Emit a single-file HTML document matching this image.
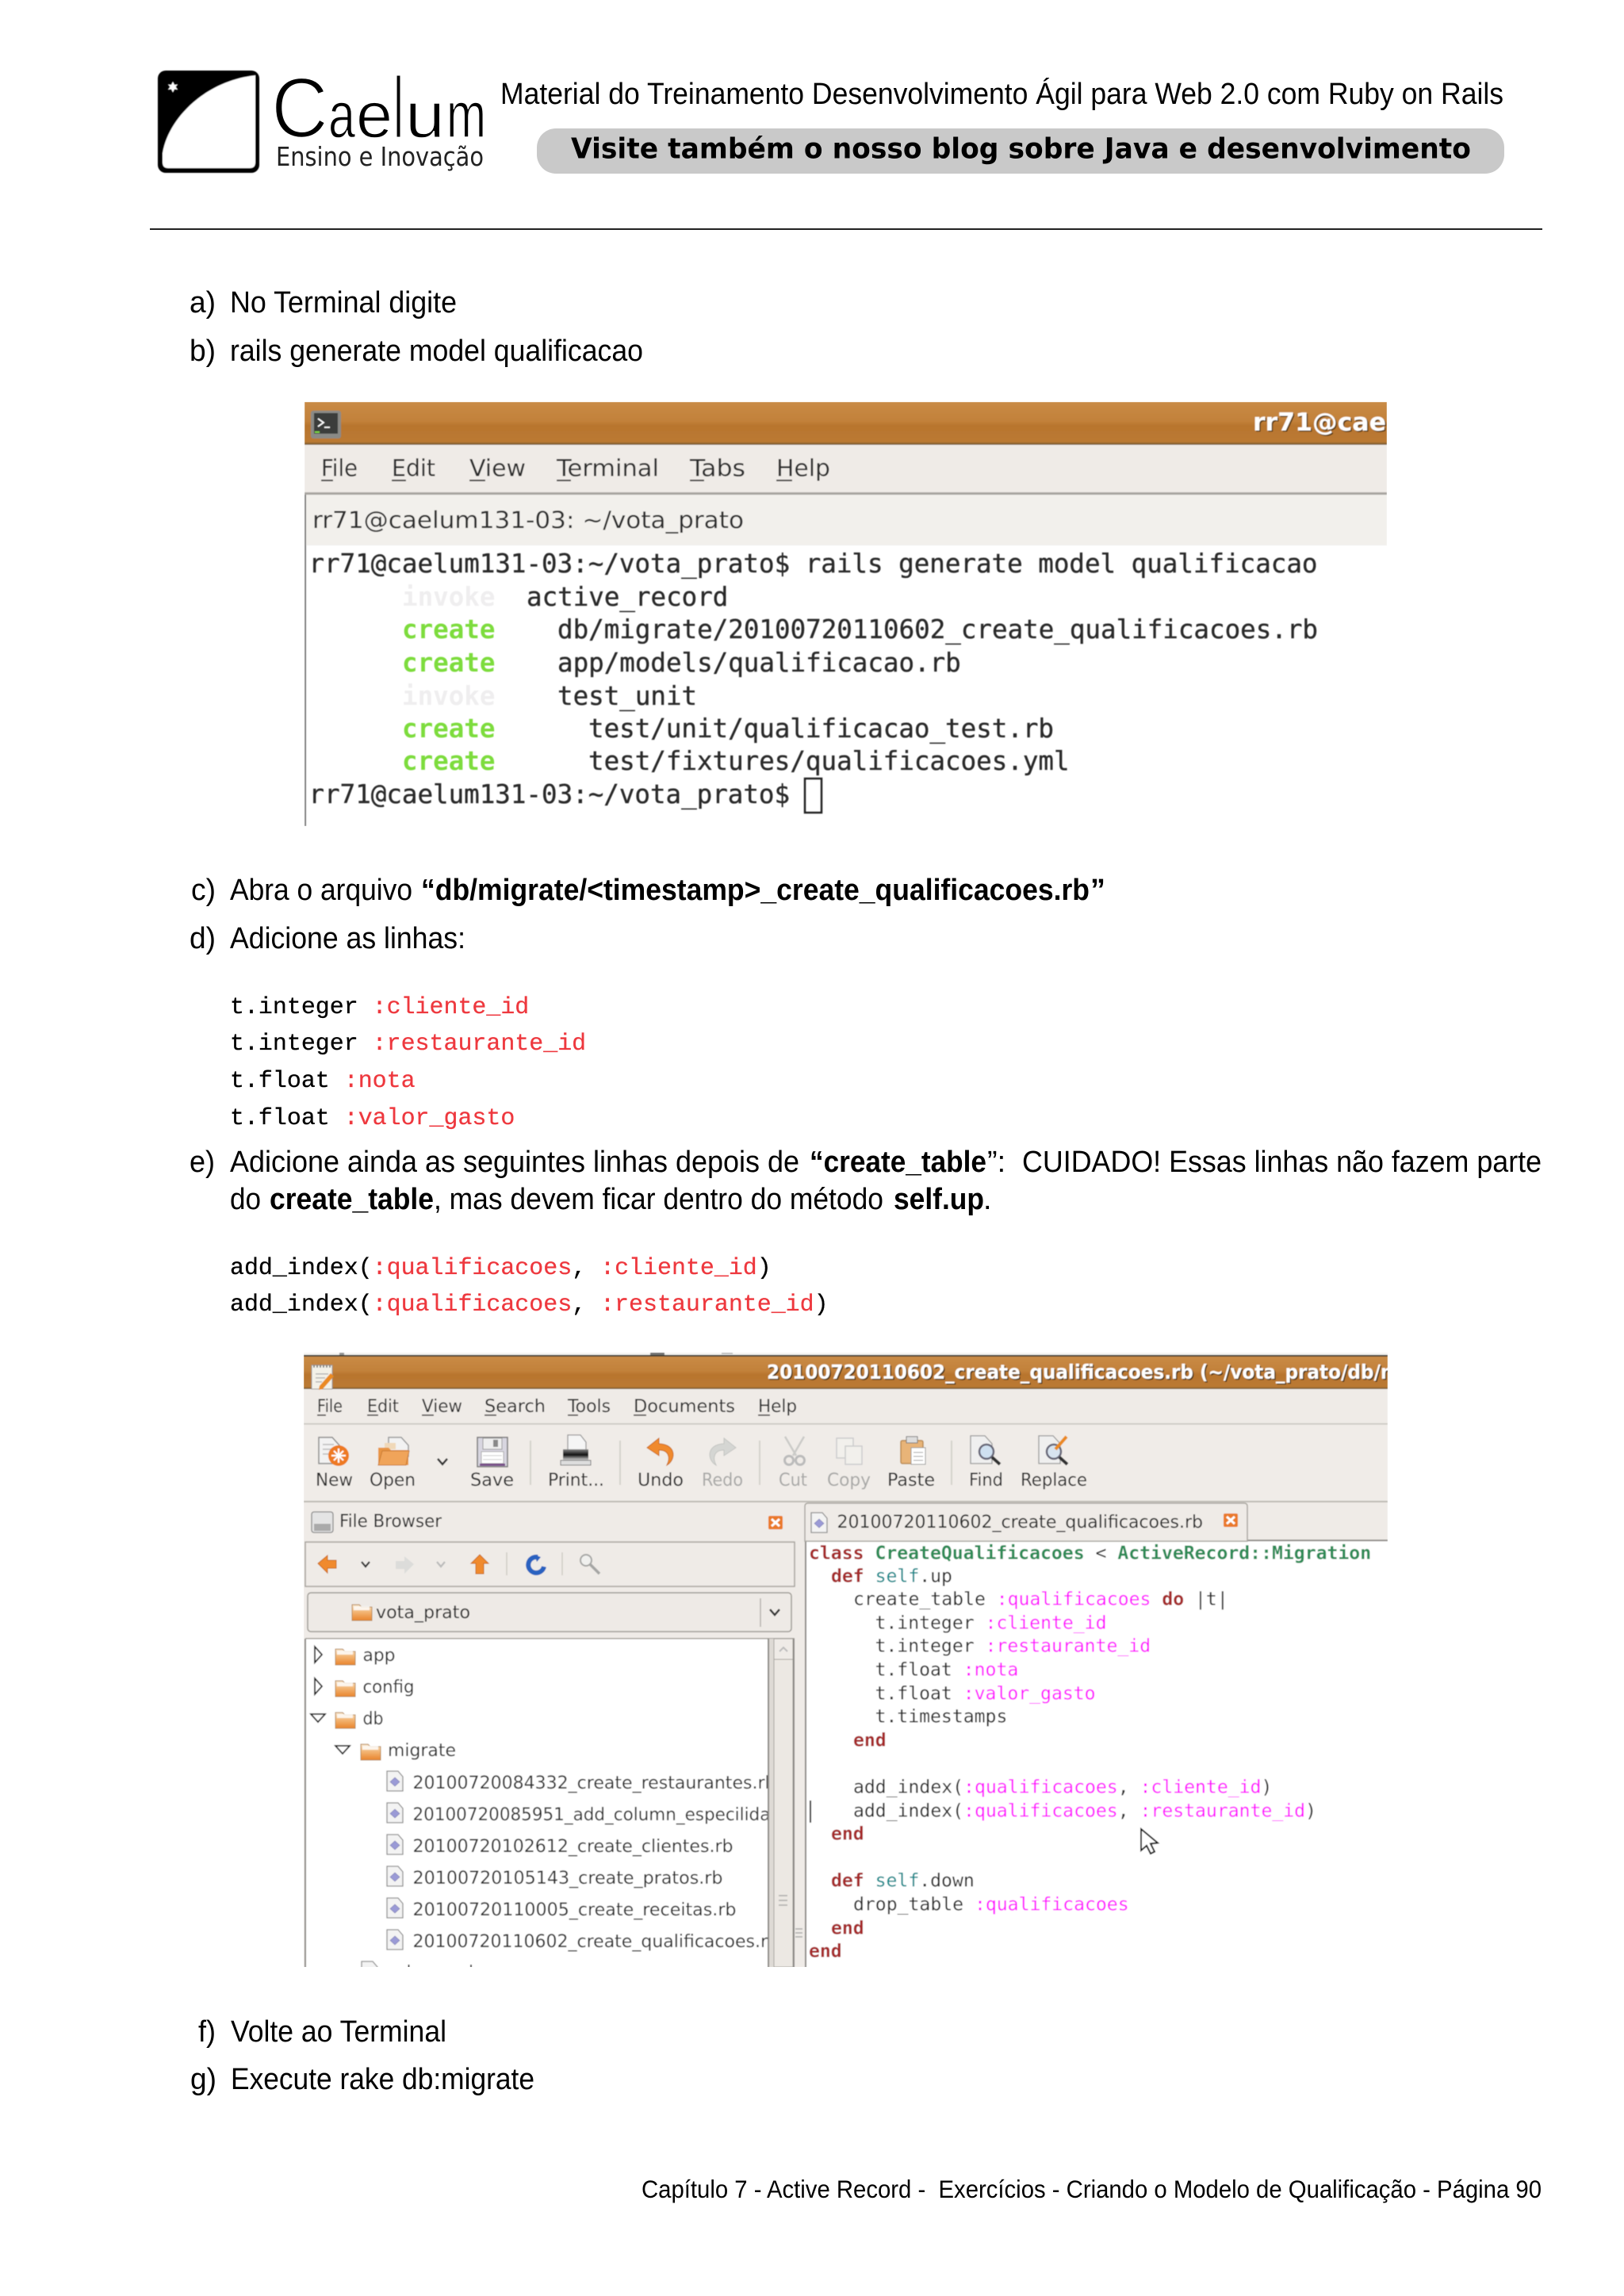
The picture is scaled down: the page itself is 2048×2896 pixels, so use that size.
<!DOCTYPE html>
<html><head><meta charset="utf-8"><title>Capítulo 7</title>
<style>
html,body{margin:0;padding:0;background:#fff}
svg{display:block}
text{white-space:pre}
.b{font-family:"Liberation Sans",sans-serif;font-size:37.9px;fill:#000}
.bb{font-family:"Liberation Sans",sans-serif;font-size:37.9px;font-weight:bold;fill:#000}
.c{font-family:"Liberation Mono",monospace;font-size:29.95px;fill:#000;stroke:#000;stroke-width:.25px}
.r{fill:#ee383e;stroke:#ee383e}
.d{font-family:"DejaVu Sans",sans-serif;fill:#2e2e2e}
.m{font-family:"DejaVu Sans Mono",monospace;font-size:32.5px;fill:#2a2a2a;stroke:#2a2a2a;stroke-width:.35px}
.cr{font-weight:bold;fill:#7ddc3c;stroke:none}
.iv{font-weight:bold;fill:#efeeef;stroke:none}
.e{font-family:"DejaVu Sans Mono",monospace;font-size:23.1px;fill:#2a2a2a}
.k{fill:#a52a2a;font-weight:bold}
.g{fill:#2e8b57;font-weight:bold}
.s{fill:#ff00ff}
.t{fill:#008a8c}
.u{font-size:22.4px}
.gr{fill:#a9a9a7}
</style></head>
<body>
<svg xmlns="http://www.w3.org/2000/svg" width="2048" height="2896" viewBox="0 0 2048 2896">
<defs>
<linearGradient id="tb" x1="0" y1="0" x2="0" y2="1">
<stop offset="0" stop-color="#c98b46"/><stop offset=".45" stop-color="#c2813a"/><stop offset=".55" stop-color="#b8752e"/><stop offset=".93" stop-color="#bb7a33"/><stop offset="1" stop-color="#6f5734"/>
</linearGradient>
<linearGradient id="fo" x1="0" y1="0" x2="0" y2="1">
<stop offset="0" stop-color="#f5e3c8"/><stop offset=".45" stop-color="#f3b777"/><stop offset="1" stop-color="#e8842c"/>
</linearGradient>
<linearGradient id="pr" x1="0" y1="0" x2="0" y2="1">
<stop offset="0" stop-color="#888"/><stop offset=".5" stop-color="#111"/><stop offset="1" stop-color="#ddd"/>
</linearGradient>
<g id="fold"><path d="M0 3 h9 l3 3 h13 v17 h-25z" fill="url(#fo)" stroke="#b78a58" stroke-width="1"/><rect x="2" y="5" width="20" height="5" fill="#fff" opacity=".8"/></g>
<g id="doc"><path d="M1 1 h14 l6 7 v18 h-20z" fill="#f3f3f3" stroke="#8f8f8f" stroke-width="1.3"/><path d="M11 9 l6 5.500 -6 5.500 -6 -5.500z" fill="#9a9ad6" stroke="#7a7ab0" stroke-width=".6"/></g>
<g id="cl"><rect width="18" height="17" rx="2" fill="#ea7a2a"/><path d="M4 4 l10 9 M14 4 l-10 9" stroke="#fff" stroke-width="3"/></g>
<clipPath id="cT"><rect x="384" y="507" width="1365" height="535"/></clipPath>
<clipPath id="cG"><rect x="383" y="1706" width="1367" height="775"/></clipPath>
<filter id="sb"><feGaussianBlur stdDeviation=".55"/></filter>
</defs>
<rect width="2048" height="2896" fill="#fff"/>

<!-- logo -->
<g filter="url(#sb)">
<rect x="199" y="89" width="128" height="129" rx="10" fill="#000"/>
<path d="M205 205 V193 C212 150 258 102 322 95 V205 Q322 212 315 212 H212 Q205 212 205 205Z" fill="#fff"/>
<path d="M218 103 l2 4 4 -.5 -2.500 3 2.500 3.500 -4 -.5 -2 4 -2 -4 -4 .5 2.500 -3.500 -2.500 -3 4 .5z" fill="#fff"/>
</g>
<g font-family="Liberation Sans,sans-serif" fill="#000" stroke="#fff">
<text x="342" y="173" font-size="108" textLength="72" lengthAdjust="spacingAndGlyphs" stroke-width="2.600">C</text>
<text x="414" y="173" font-size="82" textLength="34" lengthAdjust="spacingAndGlyphs" stroke-width="1.400">a</text>
<text x="449" y="173" font-size="82" textLength="46" lengthAdjust="spacingAndGlyphs" stroke-width="1.400">e</text>
<text x="497" y="173" font-size="108" textLength="11" lengthAdjust="spacingAndGlyphs" stroke-width="1">l</text>
<text x="511" y="173" font-size="82" textLength="50" lengthAdjust="spacingAndGlyphs" stroke-width="1.400">u</text>
<text x="563" y="173" font-size="82" textLength="50" lengthAdjust="spacingAndGlyphs" stroke-width="1.400">m</text>
</g>
<text x="348" y="209" font-family="DejaVu Sans,sans-serif" font-size="32.500" textLength="262" lengthAdjust="spacingAndGlyphs" fill="#222">Ensino e Inovação</text>

<text class="b" x="631" y="131" textLength="1265" lengthAdjust="spacingAndGlyphs">Material do Treinamento Desenvolvimento Ágil para Web 2.0 com Ruby on Rails</text>
<rect x="677" y="162" width="1220" height="57" rx="24" fill="#c9c9c9"/>
<text x="720" y="199.500" font-family="DejaVu Sans,sans-serif" font-weight="bold" font-size="36" fill="#000" textLength="1135" lengthAdjust="spacingAndGlyphs">Visite também o nosso blog sobre Java e desenvolvimento</text>
<rect x="189" y="288" width="1756" height="2" fill="#222"/>

<text class="b" x="239" y="394" textLength="33" lengthAdjust="spacingAndGlyphs">a)</text><text class="b" x="290" y="394" textLength="286" lengthAdjust="spacingAndGlyphs">No Terminal digite</text>
<text class="b" x="239" y="455" textLength="33" lengthAdjust="spacingAndGlyphs">b)</text><text class="b" x="290" y="455" textLength="521" lengthAdjust="spacingAndGlyphs">rails generate model qualificacao</text>

<!-- terminal -->
<g clip-path="url(#cT)" filter="url(#sb)">
<rect x="384" y="507" width="1365" height="54" fill="url(#tb)"/>
<rect x="384" y="561" width="1365" height="61" fill="#efebe7"/>
<rect x="384" y="621" width="1365" height="3" fill="#a8a5a0"/>
<rect x="385" y="624" width="1364" height="64" fill="#f2f0ec"/>
<rect x="384" y="624" width="2" height="418" fill="#7c7c7c"/>
<rect x="392" y="518" width="38" height="35" rx="3" fill="#8a8a86"/>
<rect x="396" y="521" width="30" height="26" fill="#3a3c3a"/>
<path d="M401 528 l7 5 -7 5 M409 539 h7" stroke="#fff" stroke-width="1.800" fill="none"/>
<rect x="397" y="544" width="6" height="2" fill="#7fd944"/>
<text x="1581.500" y="544.500" font-family="DejaVu Sans,sans-serif" font-weight="bold" font-size="31" fill="#5a3a15" textLength="168" lengthAdjust="spacingAndGlyphs">rr71@cae</text>
<text x="1580" y="543" font-family="DejaVu Sans,sans-serif" font-weight="bold" font-size="31" fill="#fff" textLength="168" lengthAdjust="spacingAndGlyphs">rr71@cae</text>
<text class="d" font-size="29" x="405" y="600.500" textLength="46" lengthAdjust="spacingAndGlyphs">File</text>
<text class="d" font-size="29" x="494" y="600.500" textLength="55" lengthAdjust="spacingAndGlyphs">Edit</text>
<text class="d" font-size="29" x="592" y="600.500" textLength="71" lengthAdjust="spacingAndGlyphs">View</text>
<text class="d" font-size="29" x="702" y="600.500" textLength="129" lengthAdjust="spacingAndGlyphs">Terminal</text>
<text class="d" font-size="29" x="870" y="600.500" textLength="70" lengthAdjust="spacingAndGlyphs">Tabs</text>
<text class="d" font-size="29" x="979" y="600.500" textLength="68" lengthAdjust="spacingAndGlyphs">Help</text>
<path d="M405 606h15M494 606h18M592 606h20M702 606h18M870 606h18M979 606h20" stroke="#333" stroke-width="2"/>
<text class="d" font-size="29" x="394" y="666" textLength="544" lengthAdjust="spacingAndGlyphs">rr71@caelum131-03: ~/vota_prato</text>
<text class="m" x="389.500" y="722" textLength="1272" lengthAdjust="spacing">rr71@caelum131-03:~/vota_prato$ rails generate model qualificacao</text>
<text class="m iv" x="507" y="764">invoke</text><text class="m" x="664" y="764">active_record</text>
<text class="m cr" x="507" y="805">create</text><text class="m" x="703" y="805" textLength="959" lengthAdjust="spacing">db/migrate/20100720110602_create_qualificacoes.rb</text>
<text class="m cr" x="507" y="847">create</text><text class="m" x="703" y="847">app/models/qualificacao.rb</text>
<text class="m iv" x="507" y="889">invoke</text><text class="m" x="703" y="889">test_unit</text>
<text class="m cr" x="507" y="930">create</text><text class="m" x="742" y="930">test/unit/qualificacao_test.rb</text>
<text class="m cr" x="507" y="971">create</text><text class="m" x="742" y="971">test/fixtures/qualificacoes.yml</text>
<text class="m" x="389.500" y="1013">rr71@caelum131-03:~/vota_prato$</text>
<rect x="1015" y="982" width="21" height="43" fill="none" stroke="#222" stroke-width="2.500"/>
</g>

<text class="b" x="241" y="1135" textLength="31" lengthAdjust="spacingAndGlyphs">c)</text><text class="b" x="290" y="1135" textLength="230" lengthAdjust="spacingAndGlyphs">Abra o arquivo</text>
<text class="bb" x="531" y="1135" textLength="843" lengthAdjust="spacingAndGlyphs">“db/migrate/&lt;timestamp&gt;_create_qualificacoes.rb</text><text class="bb" x="1375" y="1135">”</text>
<text class="b" x="239" y="1196" textLength="33" lengthAdjust="spacingAndGlyphs">d)</text><text class="b" x="290" y="1196" textLength="297" lengthAdjust="spacingAndGlyphs">Adicione as linhas:</text>

<text class="c" x="290" y="1278">t.integer <tspan class="r">:cliente_id</tspan></text>
<text class="c" x="290" y="1324">t.integer <tspan class="r">:restaurante_id</tspan></text>
<text class="c" x="290" y="1371">t.float <tspan class="r">:nota</tspan></text>
<text class="c" x="290" y="1418">t.float <tspan class="r">:valor_gasto</tspan></text>

<text class="b" x="239" y="1478" textLength="32" lengthAdjust="spacingAndGlyphs">e)</text>
<text class="b" x="290" y="1478" textLength="718" lengthAdjust="spacingAndGlyphs">Adicione ainda as seguintes linhas depois de</text>
<text class="bb" x="1021" y="1478" textLength="223" lengthAdjust="spacingAndGlyphs">“create_table</text>
<text class="b" x="1245" y="1478">”:</text>
<text class="b" x="1289" y="1478" textLength="655" lengthAdjust="spacingAndGlyphs">CUIDADO! Essas linhas não fazem parte</text>
<text class="b" x="290" y="1525" textLength="39" lengthAdjust="spacingAndGlyphs">do</text>
<text class="bb" x="340" y="1525" textLength="207" lengthAdjust="spacingAndGlyphs">create_table</text>
<text class="b" x="547" y="1525" textLength="567" lengthAdjust="spacingAndGlyphs">, mas devem ficar dentro do método</text>
<text class="bb" x="1127" y="1525" textLength="114" lengthAdjust="spacingAndGlyphs">self.up</text>
<text class="b" x="1240" y="1525">.</text>

<text class="c" x="290" y="1607">add_index(<tspan class="r">:qualificacoes</tspan>, <tspan class="r">:cliente_id</tspan>)</text>
<text class="c" x="290" y="1653">add_index(<tspan class="r">:qualificacoes</tspan>, <tspan class="r">:restaurante_id</tspan>)</text>

<!-- gedit -->
<g clip-path="url(#cG)" filter="url(#sb)">
<rect x="383" y="1706" width="1367" height="4" fill="#f5f4f2"/>
<rect x="428" y="1706" width="6" height="3" fill="#999"/><rect x="820" y="1706" width="18" height="3" fill="#777"/><rect x="910" y="1706" width="14" height="2" fill="#bbb"/>
<rect x="383" y="1709" width="1367" height="2" fill="#3e3a30"/>
<rect x="383" y="1711" width="1367" height="41" fill="url(#tb)"/>
<rect x="383" y="1752" width="1367" height="43" fill="#efebe7"/>
<rect x="383" y="1795" width="1367" height="2" fill="#cfccc6"/>
<rect x="383" y="1797" width="1367" height="97" fill="#f0ece8"/>
<rect x="383" y="1893" width="1367" height="2" fill="#bdbab4"/>
<rect x="383" y="1895" width="1367" height="586" fill="#efebe7"/>
<!-- title -->
<path d="M393 1722h26v30h-26z" fill="#f3f1e8" stroke="#999" stroke-width="1"/>
<path d="M396 1722v3M400 1722v3M404 1722v3M408 1722v3M412 1722v3M416 1722v3" stroke="#666" stroke-width="1.500"/>
<path d="M398 1733h16M398 1738h12M398 1743h8" stroke="#aaa" stroke-width="1.200"/>
<path d="M403 1748 l14 -16 4 4 -14 16 -5 1z" fill="#ea8a20"/>
<text x="968.500" y="1740.500" font-family="DejaVu Sans,sans-serif" font-weight="bold" font-size="24.500" fill="#51371a" textLength="798" lengthAdjust="spacingAndGlyphs">20100720110602_create_qualificacoes.rb (~/vota_prato/db/m</text>
<text x="967" y="1739" font-family="DejaVu Sans,sans-serif" font-weight="bold" font-size="24.500" fill="#fff" textLength="798" lengthAdjust="spacingAndGlyphs">20100720110602_create_qualificacoes.rb (~/vota_prato/db/m</text>
<!-- menu -->
<text class="d u" x="400" y="1781" textLength="32" lengthAdjust="spacingAndGlyphs">File</text>
<text class="d u" x="463" y="1781" textLength="40" lengthAdjust="spacingAndGlyphs">Edit</text>
<text class="d u" x="532" y="1781" textLength="51" lengthAdjust="spacingAndGlyphs">View</text>
<text class="d u" x="611" y="1781" textLength="77" lengthAdjust="spacingAndGlyphs">Search</text>
<text class="d u" x="716" y="1781" textLength="54" lengthAdjust="spacingAndGlyphs">Tools</text>
<text class="d u" x="799" y="1781" textLength="128" lengthAdjust="spacingAndGlyphs">Documents</text>
<text class="d u" x="956" y="1781" textLength="49" lengthAdjust="spacingAndGlyphs">Help</text>
<path d="M400 1785h11M463 1785h14M532 1785h15M611 1785h15M716 1785h13M799 1785h16M956 1785h15" stroke="#333" stroke-width="1.500"/>
<!-- toolbar labels -->
<text class="d u" x="398" y="1874" textLength="47" lengthAdjust="spacingAndGlyphs">New</text>
<text class="d u" x="466" y="1874" textLength="58" lengthAdjust="spacingAndGlyphs">Open</text>
<text class="d u" x="593" y="1874" textLength="55" lengthAdjust="spacingAndGlyphs">Save</text>
<text class="d u" x="691" y="1874" textLength="71" lengthAdjust="spacingAndGlyphs">Print...</text>
<text class="d u" x="804" y="1874" textLength="58" lengthAdjust="spacingAndGlyphs">Undo</text>
<text class="d u gr" x="885" y="1874" textLength="52" lengthAdjust="spacingAndGlyphs">Redo</text>
<text class="d u gr" x="982" y="1874" textLength="36" lengthAdjust="spacingAndGlyphs">Cut</text>
<text class="d u gr" x="1043" y="1874" textLength="55" lengthAdjust="spacingAndGlyphs">Copy</text>
<text class="d u" x="1119" y="1874" textLength="60" lengthAdjust="spacingAndGlyphs">Paste</text>
<text class="d u" x="1222" y="1874" textLength="43" lengthAdjust="spacingAndGlyphs">Find</text>
<text class="d u" x="1287" y="1874" textLength="84" lengthAdjust="spacingAndGlyphs">Replace</text>
<path d="M669 1817v56M782 1817v56M958 1817v56M1200 1817v56" stroke="#d5d2cc" stroke-width="2"/>
<!-- New -->
<path d="M402 1813h17l9 10v23h-26z" fill="#f2f2f2" stroke="#8a8a8a" stroke-width="1.500"/>
<path d="M407 1822h14M407 1828h14M407 1834h10" stroke="#bbb" stroke-width="1.500"/>
<circle cx="427" cy="1836" r="13" fill="#ee7a22"/><path d="M427 1827v18M418 1836h18M421 1830l12 12M433 1830l-12 12" stroke="#fff" stroke-width="2.200"/>
<!-- Open -->
<path d="M490 1813h16l9 10v14h-25z" fill="#f2f2f2" stroke="#999" stroke-width="1.500"/>
<path d="M485 1820h14v8h-14z" fill="#f0d8b8"/>
<path d="M477 1826h13l3 3h22v19h-38z" fill="#e89545"/><path d="M477 1848l5-18h34l-4 18z" fill="#f0a45a" stroke="#c97a30" stroke-width="1"/>
<path d="M552 1840l6 7 6-7" fill="none" stroke="#333" stroke-width="2.500"/>
<!-- Save -->
<rect x="602" y="1813" width="38" height="37" fill="#d8d6e0" stroke="#777" stroke-width="1.500"/>
<rect x="609" y="1814" width="24" height="14" fill="#eee" stroke="#999"/><rect x="622" y="1816" width="6" height="9" fill="#888"/>
<rect x="607" y="1831" width="28" height="15" fill="#fff" stroke="#aaa"/><path d="M609 1836h24M609 1841h24" stroke="#ccc"/>
<rect x="605" y="1846" width="32" height="3" fill="#7a4f8a"/>
<!-- Print -->
<path d="M716 1810h16l7 9v13h-23z" fill="#f5f5f5" stroke="#999" stroke-width="1.300"/>
<rect x="710" y="1828" width="32" height="14" fill="url(#pr)"/>
<rect x="707" y="1842" width="38" height="6" fill="#ddd" stroke="#777" stroke-width="1"/>
<!-- Undo -->
<path d="M831 1814 L816 1826 L831 1836 V1829 C843 1829 846 1838 841 1848 C852 1842 854 1822 831 1821Z" fill="#f08a2e" stroke="#c96a18" stroke-width="1"/>
<!-- Redo -->
<path d="M913 1814 L928 1826 L913 1836 V1829 C901 1829 898 1838 903 1848 C892 1842 890 1822 913 1821Z" fill="#d5d6d3" stroke="#c3c4c1" stroke-width="1"/>
<!-- Cut -->
<path d="M990 1812l14 24M1014 1812l-14 24" stroke="#cbcbc8" stroke-width="2.500"/><circle cx="995" cy="1842" r="5.500" fill="none" stroke="#bbb" stroke-width="3"/><circle cx="1009" cy="1842" r="5.500" fill="none" stroke="#bbb" stroke-width="3"/>
<!-- Copy -->
<rect x="1055" y="1814" width="21" height="25" fill="#f2f0ec" stroke="#ccc" stroke-width="1.500"/><rect x="1066" y="1824" width="21" height="23" fill="#f2f0ec" stroke="#ccc" stroke-width="1.500"/>
<!-- Paste -->
<rect x="1136" y="1817" width="28" height="29" rx="2" fill="#e8b478" stroke="#b98a50" stroke-width="1.500"/><rect x="1143" y="1812" width="14" height="8" fill="#ddd" stroke="#777"/>
<rect x="1149" y="1826" width="18" height="21" fill="#fff" stroke="#999"/><path d="M1152 1832h12M1152 1837h12M1152 1842h12" stroke="#999"/>
<!-- Find -->
<path d="M1224 1811h18l9 10v25h-27z" fill="#efefef" stroke="#999" stroke-width="1.300"/>
<circle cx="1244" cy="1831" r="9" fill="#cfe0f0" stroke="#667" stroke-width="2.500"/><path d="M1251 1838l10 9" stroke="#333" stroke-width="4"/>
<!-- Replace -->
<path d="M1310 1811h18l9 10v25h-27z" fill="#efefef" stroke="#999" stroke-width="1.300"/>
<circle cx="1329" cy="1831" r="9" fill="#d8e4f0" stroke="#667" stroke-width="2.500"/><path d="M1336 1838l10 9" stroke="#333" stroke-width="4"/><path d="M1331 1828l14 -16" stroke="#ea8a20" stroke-width="4"/>
<!-- file browser header -->
<rect x="393" y="1907" width="27" height="26" rx="3" fill="#e4e4e4" stroke="#888" stroke-width="1.300"/><rect x="396" y="1922" width="21" height="9" fill="#aaa"/>
<text class="d u" x="428" y="1926" textLength="129" lengthAdjust="spacingAndGlyphs">File Browser</text>
<use href="#cl" x="969" y="1912"/>
<!-- nav box -->
<rect x="385" y="1945" width="617" height="56" fill="#efebe7" stroke="#a5a29c" stroke-width="1.500"/>
<path d="M401 1972l12-10v6h11v10h-11v6z" fill="#f08a2e" stroke="#c96a18"/>
<path d="M456 1970l5 6 5-6" fill="none" stroke="#333" stroke-width="2.200"/>
<path d="M522 1973l-12-10v6h-11v10h11v6z" fill="#dcdcda"/>
<path d="M551 1970l5 6 5-6" fill="none" stroke="#bbb" stroke-width="2.200"/>
<path d="M605 1961l11 11h-6v13h-10v-13h-6z" fill="#f08a2e" stroke="#c96a18"/>
<path d="M639 1958v29M709 1958v29" stroke="#cfccc6" stroke-width="1.500"/>
<path d="M678 1964a10 10 0 1 0 8 12" fill="none" stroke="#2a62c0" stroke-width="6"/><path d="M674 1961l8 3-5 6z" fill="#2a62c0"/>
<circle cx="739" cy="1968" r="7" fill="#f0f0ee" stroke="#a6a6a4" stroke-width="2"/><path d="M744 1973l12 12" stroke="#a6a6a4" stroke-width="3.500"/>
<!-- combo -->
<rect x="388" y="2009" width="610" height="49" rx="4" fill="#eeeae6" stroke="#9e9b95" stroke-width="1.500"/>
<use href="#fold" x="444" y="2021"/>
<text class="d u" x="474" y="2041" textLength="119" lengthAdjust="spacingAndGlyphs">vota_prato</text>
<path d="M959 2016v36" stroke="#b5b2ac" stroke-width="1.500"/><path d="M971 2030l6 7 6-7" fill="none" stroke="#333" stroke-width="2.500"/>
<!-- tree -->
<rect x="385" y="2067" width="583" height="420" fill="#fff"/>
<rect x="384" y="2067" width="2" height="420" fill="#8b8985"/>
<rect x="385" y="2066" width="617" height="1.500" fill="#a5a29c"/>
<path d="M397 2077l9 10-9 10z" fill="#fff" stroke="#222" stroke-width="1.800"/>
<path d="M397 2117l9 10-9 10z" fill="#fff" stroke="#222" stroke-width="1.800"/>
<path d="M392 2162h18l-9 10z" fill="#fff" stroke="#222" stroke-width="1.800"/>
<path d="M423 2202h18l-9 10z" fill="#fff" stroke="#222" stroke-width="1.800"/>
<use href="#fold" x="423" y="2077"/><use href="#fold" x="423" y="2117"/><use href="#fold" x="423" y="2157"/><use href="#fold" x="455" y="2197"/>
<text class="d u" x="457.500" y="2095" textLength="41" lengthAdjust="spacingAndGlyphs">app</text>
<text class="d u" x="457.500" y="2135" textLength="65" lengthAdjust="spacingAndGlyphs">config</text>
<text class="d u" x="457.500" y="2175" textLength="26" lengthAdjust="spacingAndGlyphs">db</text>
<text class="d u" x="489" y="2215" textLength="86" lengthAdjust="spacingAndGlyphs">migrate</text>
<use href="#doc" x="487" y="2233"/><use href="#doc" x="487" y="2273"/><use href="#doc" x="487" y="2313"/><use href="#doc" x="487" y="2353"/><use href="#doc" x="487" y="2393"/><use href="#doc" x="487" y="2433"/><use href="#doc" x="455" y="2473"/>
<text class="d u" x="520.500" y="2256" style="font-size:22px" textLength="458" lengthAdjust="spacingAndGlyphs">20100720084332_create_restaurantes.rb</text>
<text class="d u" x="520.500" y="2296" style="font-size:22px" textLength="507" lengthAdjust="spacingAndGlyphs">20100720085951_add_column_especilidade.rb</text>
<text class="d u" x="520.500" y="2336" style="font-size:22px" textLength="404" lengthAdjust="spacingAndGlyphs">20100720102612_create_clientes.rb</text>
<text class="d u" x="520.500" y="2376" style="font-size:22px" textLength="391" lengthAdjust="spacingAndGlyphs">20100720105143_create_pratos.rb</text>
<text class="d u" x="520.500" y="2416" style="font-size:22px" textLength="408" lengthAdjust="spacingAndGlyphs">20100720110005_create_receitas.rb</text>
<text class="d u" x="520.500" y="2456" style="font-size:22px" textLength="461.500" lengthAdjust="spacingAndGlyphs">20100720110602_create_qualificacoes.rb</text>
<text class="d u" x="489" y="2495" style="font-size:22px">schema.rb</text>
<!-- scrollbar -->
<rect x="968" y="2067" width="34" height="420" fill="#dedad5"/>
<rect x="968" y="2067" width="2" height="420" fill="#8b8985"/>
<rect x="976" y="2067" width="24" height="26" fill="#efebe7" stroke="#a5a29c"/>
<path d="M983 2083l5-5 5 5" fill="none" stroke="#bbb" stroke-width="2"/>
<rect x="976" y="2093" width="24" height="388" fill="#ece8e3" stroke="#a5a29c"/>
<path d="M982 2391h11M982 2397h11M982 2403h11" stroke="#aaa" stroke-width="1.500"/>
<rect x="1002" y="2067" width="14" height="420" fill="#efebe7"/>
<rect x="1000" y="2067" width="2" height="420" fill="#8b8985"/>
<path d="M1003 2433h9M1003 2438h9M1003 2443h9" stroke="#aaa" stroke-width="1.500"/>
<!-- tab & editor -->
<rect x="1016" y="1942" width="734" height="540" fill="#fff"/>
<rect x="1015" y="1942" width="2" height="540" fill="#8b8985"/>
<rect x="1015" y="1942" width="735" height="2" fill="#8b8985"/>
<path d="M1015 1944v-44q0-4 4-4h550q4 0 4 4v44z" fill="#efebe7" stroke="#aaa7a1" stroke-width="1.500"/>
<use href="#doc" x="1022" y="1907"/>
<text class="d u" x="1055.500" y="1927" textLength="461.500" lengthAdjust="spacingAndGlyphs">20100720110602_create_qualificacoes.rb</text>
<use href="#cl" x="1543" y="1909"/>
<text class="e" x="1020" y="1966.500"><tspan class="k">class</tspan> <tspan class="g">CreateQualificacoes</tspan> &lt; <tspan class="g">ActiveRecord::Migration</tspan></text>
<text class="e" x="1048" y="1995.500"><tspan class="k">def</tspan> <tspan class="t">self</tspan>.up</text>
<text class="e" x="1076" y="2024.500">create_table <tspan class="s">:qualificacoes</tspan> <tspan class="k">do</tspan> |t|</text>
<text class="e" x="1103.500" y="2054.500">t.integer <tspan class="s">:cliente_id</tspan></text>
<text class="e" x="1103.500" y="2083.500">t.integer <tspan class="s">:restaurante_id</tspan></text>
<text class="e" x="1103.500" y="2113.500">t.float <tspan class="s">:nota</tspan></text>
<text class="e" x="1103.500" y="2143.500">t.float <tspan class="s">:valor_gasto</tspan></text>
<text class="e" x="1103.500" y="2172.500">t.timestamps</text>
<text class="e k" x="1076" y="2202.500">end</text>
<text class="e" x="1076" y="2261.500">add_index(<tspan class="s">:qualificacoes</tspan>, <tspan class="s">:cliente_id</tspan>)</text>
<text class="e" x="1076" y="2291.500">add_index(<tspan class="s">:qualificacoes</tspan>, <tspan class="s">:restaurante_id</tspan>)</text>
<text class="e k" x="1048" y="2320.500">end</text>
<text class="e" x="1048" y="2379.500"><tspan class="k">def</tspan> <tspan class="t">self</tspan>.down</text>
<text class="e" x="1076" y="2409.500">drop_table <tspan class="s">:qualificacoes</tspan></text>
<text class="e k" x="1048" y="2439.500">end</text>
<text class="e k" x="1020" y="2468.500">end</text>
<rect x="1021" y="2271" width="2" height="28" fill="#111"/>
<path d="M1439 2307v27l7-6 5 10 5-2.500 -5-10 9-1z" fill="#fff" stroke="#111" stroke-width="2"/>
</g>

<text class="b" x="250" y="2575" textLength="22" lengthAdjust="spacingAndGlyphs">f)</text><text class="b" x="291" y="2575" textLength="272" lengthAdjust="spacingAndGlyphs">Volte ao Terminal</text>
<text class="b" x="240" y="2635" textLength="33" lengthAdjust="spacingAndGlyphs">g)</text><text class="b" x="291" y="2635" textLength="383" lengthAdjust="spacingAndGlyphs">Execute rake db:migrate</text>
<text class="b" x="809" y="2772" style="font-size:31.500px" textLength="1135" lengthAdjust="spacingAndGlyphs">Capítulo 7 - Active Record -  Exercícios - Criando o Modelo de Qualificação - Página 90</text>
</svg>
</body></html>
